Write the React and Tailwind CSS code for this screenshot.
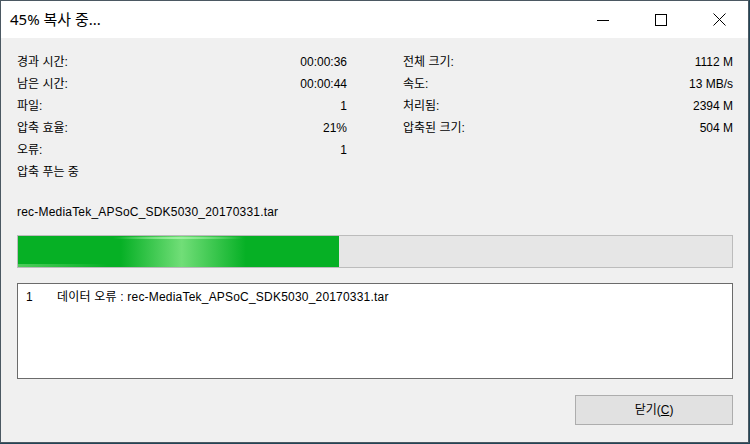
import React from 'react';

const left = [
  ['경과 시간:', '00:00:36'],
  ['남은 시간:', '00:00:44'],
  ['파일:', '1'],
  ['압축 효율:', '21%'],
  ['오류:', '1'],
];

const right = [
  ['전체 크기:', '1112 M'],
  ['속도:', '13 MB/s'],
  ['처리됨:', '2394 M'],
  ['압축된 크기:', '504 M'],
];

const font = "font-['Liberation_Sans','Noto_Sans_CJK_KR',sans-serif]";

const InfoRow = ({ label, value }) => (
  <div className="flex h-[22px] items-center justify-between">
    <span>{label}</span>
    <span>{value}</span>
  </div>
);

export default function App() {
  return (
    <div className={`w-[750px] h-[444px] bg-[#234556] ${font} text-[12px] text-black`}>
      <div className="w-[749px] h-[443px] border border-[#4b5862] bg-[#f0f0f0] flex flex-col">
        {/* title bar */}
        <div className="h-[37px] bg-white flex items-center justify-between">
          <span className="pl-[9px] text-[15px] font-['Noto_Sans','Noto_Sans_CJK_KR',sans-serif] text-black">
            45% 복사 중...
          </span>
          <div className="flex h-full">
            <div className="w-[58px] h-full flex items-center justify-center">
              <svg width="12" height="12" viewBox="0 0 12 12">
                <path d="M0 6.5H12" stroke="#000" strokeWidth="1" />
              </svg>
            </div>
            <div className="w-[58px] h-full flex items-center justify-center">
              <svg width="12" height="12" viewBox="0 0 12 12">
                <rect x="0.5" y="0.5" width="11" height="11" fill="none" stroke="#000" strokeWidth="1" />
              </svg>
            </div>
            <div className="w-[58px] h-full flex items-center justify-center">
              <svg width="13" height="13" viewBox="0 0 13 13">
                <path d="M0.5 0.5L12.5 12.5M12.5 0.5L0.5 12.5" stroke="#000" strokeWidth="1" />
              </svg>
            </div>
          </div>
        </div>

        {/* body */}
        <div className="flex-1 flex flex-col pl-[16px] pr-[15px] pt-[13px]">
          <div className="flex gap-[56px]">
            <div className="w-[330px] flex flex-col">
              {left.map(([l, v]) => (
                <InfoRow key={l} label={l} value={v} />
              ))}
              <div className="flex h-[22px] items-center">압축 푸는 중</div>
            </div>
            <div className="w-[330px] flex flex-col">
              {right.map(([l, v]) => (
                <InfoRow key={l} label={l} value={v} />
              ))}
            </div>
          </div>

          <div className="mt-[18px] h-[22px] flex items-center tracking-[0.2px]">rec-MediaTek_APSoC_SDK5030_20170331.tar</div>

          <div className="mt-[12px] h-[33px] border border-[#bcbcbc] bg-[#e6e6e6] relative">
            <div className="w-[45%] h-full bg-[#06b025] relative overflow-hidden">
              <div className="absolute inset-0 bg-[linear-gradient(90deg,transparent_32%,#7de381_51%,transparent_71%)] opacity-90" />
              <div className="absolute left-[95px] top-[1px] w-[130px] h-[2px] bg-[linear-gradient(90deg,transparent,#9ff0a2,transparent)]" />
              <div className="absolute left-0 bottom-0 w-[90px] h-[3px] bg-[linear-gradient(90deg,#6fd873,transparent)] opacity-70" />
            </div>
          </div>

          <div className="mt-[15px] h-[96px] bg-white border border-[#6b6b6b] flex items-start pt-[4px]">
            <span className="w-[39px] pl-[8px]">1</span>
            <span className="tracking-[0.2px]">데이터 오류 : rec-MediaTek_APSoC_SDK5030_20170331.tar</span>
          </div>

          <div className="mt-[16px] flex justify-end">
            <button className="w-[158px] h-[30px] bg-[#e1e1e1] border border-[#adadad] flex items-center justify-center text-[12px]">
              닫기(<span className="underline">C</span>)
            </button>
          </div>
        </div>
      </div>
    </div>
  );
}
